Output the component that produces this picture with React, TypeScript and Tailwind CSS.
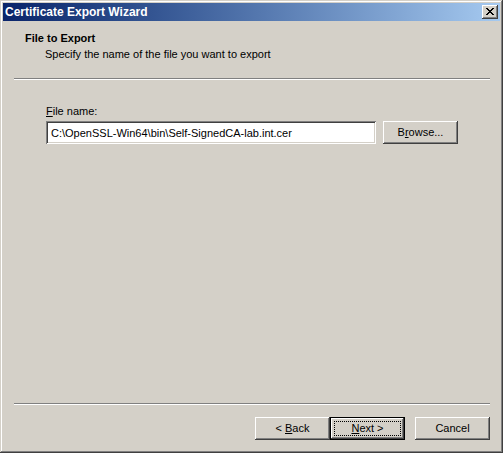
import React from "react";

const raised =
  "shadow-[inset_-1px_-1px_#404040,inset_1px_1px_#ffffff,inset_-2px_-2px_#808080,inset_2px_2px_#d4d0c8]";

function Btn({ children, def = false }: { children: React.ReactNode; def?: boolean }) {
  if (def) {
    return (
      <div className="w-[75px] h-[23px] border border-black bg-[#d4d0c8] flex">
        <div className="flex-1 p-[3px] shadow-[inset_-1px_-1px_#404040,inset_1px_1px_#ffffff,inset_-2px_-2px_#808080]">
          <div className="w-full h-full border border-dotted border-black flex items-center justify-center text-[11px] leading-[13px] text-black">
            <span className="whitespace-pre">{children}</span>
          </div>
        </div>
      </div>
    );
  }
  return (
    <div
      className={`w-[75px] h-[23px] bg-[#d4d0c8] flex items-center justify-center text-[11px] leading-[13px] text-black pb-[1px] ${raised}`}
    >
      <span className="whitespace-pre">{children}</span>
    </div>
  );
}

function Separator() {
  return (
    <div className="ml-[11px] mr-[10px] flex flex-col">
      <div className="h-[1px] bg-[#808080]" />
      <div className="h-[1px] bg-white" />
    </div>
  );
}

export default function App() {
  return (
    <div
      className="w-[503px] h-[453px] bg-[#d4d0c8] p-[3px] flex flex-col shadow-[inset_-1px_-1px_#404040,inset_1px_1px_#d4d0c8,inset_-2px_-2px_#808080,inset_2px_2px_#ffffff]"
      style={{ fontFamily: '"Liberation Sans", Arial, sans-serif' }}
    >
      {/* Title bar */}
      <div className="h-[18px] flex items-center justify-between bg-gradient-to-r from-[#0a246a] to-[#a6caf0] pl-[2px] pr-[2px]">
        <span className="text-white font-bold text-[12px] leading-[18px] pb-[1px]">
          Certificate Export Wizard
        </span>
        <div className={`w-[16px] h-[14px] bg-[#d4d0c8] relative ${raised}`}>
          <svg
            width="8"
            height="7"
            viewBox="0 0 8 7"
            className="absolute left-[4px] top-[3px]"
            shapeRendering="crispEdges"
          >
            <path
              d="M0 0h2v1h-2zM6 0h2v1h-2zM1 1h2v1h-2zM5 1h2v1h-2zM2 2h4v1h-4zM3 3h2v1h-2zM2 4h4v1h-4zM1 5h2v1h-2zM5 5h2v1h-2zM0 6h2v1h-2zM6 6h2v1h-2z"
              fill="#000"
            />
          </svg>
        </div>
      </div>

      {/* Header */}
      <div className="pt-[11px] pl-[22px] text-black">
        <div className="font-bold text-[11px] leading-[13px]">File to Export</div>
        <div className="mt-[3px] pl-[20px] text-[11px] leading-[13px]">
          Specify the name of the file you want to export
        </div>
      </div>

      <div className="mt-[17px]">
        <Separator />
      </div>

      {/* Body */}
      <div className="mt-[25px] pl-[43px] text-black">
        <div className="text-[11px] leading-[13px]">
          <u>F</u>ile name:
        </div>
        <div className="mt-[3px] flex items-start gap-[7px]">
          <div className="w-[330px] h-[23px] bg-white pl-[5px] pt-[2px] text-[11px] leading-[13px] shadow-[inset_1px_1px_#808080,inset_-1px_-1px_#ffffff,inset_2px_2px_#404040,inset_-2px_-2px_#d4d0c8] flex items-center">
            C:\OpenSSL-Win64\bin\Self-SignedCA-lab.int.cer
          </div>
          <Btn>
            B<u>r</u>owse...
          </Btn>
        </div>
      </div>

      <div className="flex-1" />

      <Separator />

      <div className="mt-[12px] mb-[10px] pr-[10px] flex justify-end">
        <Btn>
          {"< "}
          <u>B</u>ack
        </Btn>
        <Btn def>
          <u>N</u>
          {"ext >"}
        </Btn>
        <div className="w-[10px]" />
        <Btn>Cancel</Btn>
      </div>
    </div>
  );
}
